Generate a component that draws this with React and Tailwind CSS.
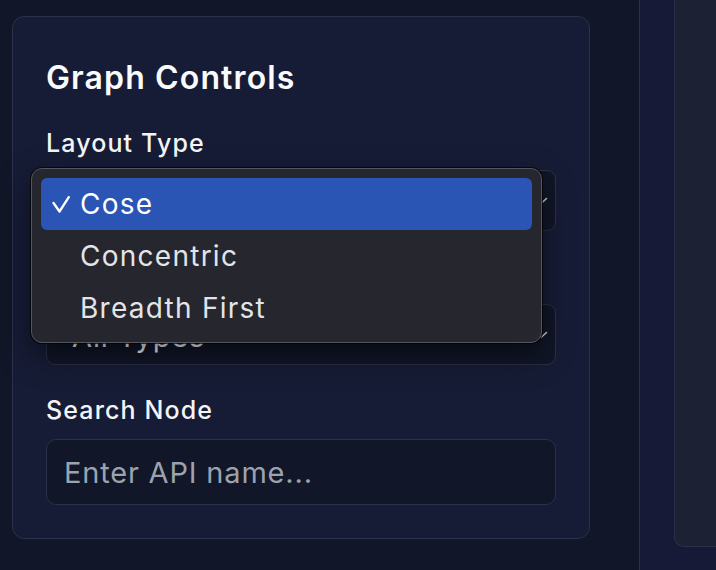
import React from "react";

function Chevron() {
  return (
    <svg
      className="absolute right-[7px] top-1/2 -translate-y-1/2"
      width="14"
      height="8"
      viewBox="0 0 14 8"
      fill="none"
    >
      <path d="M1.5 1.5 L7 6.5 L12.5 1.5" stroke="#d1d5db" strokeWidth="1.6" strokeLinecap="round" strokeLinejoin="round" />
    </svg>
  );
}

function Check() {
  return (
    <svg width="18" height="17" viewBox="0 0 18 17" fill="none">
      <path d="M1.5 7 L7.5 15.5 L16.8 1.2" stroke="#ffffff" strokeWidth="2.3" strokeLinecap="round" strokeLinejoin="round" />
    </svg>
  );
}

export default function App() {
  const options = ["Cose", "Concentric", "Breadth First"];
  return (
    <div className="w-[716px] h-[570px] overflow-hidden flex bg-[#111628] font-['Inter',sans-serif] text-white">
      <div className="w-[639px] shrink-0 pl-3 pt-4">
        <div className="relative w-[578px] h-[523px] rounded-[12px] border border-[#2b3147] bg-[#171c36] px-[33px] pt-[41px]">
          <h2 className="text-[32px] leading-[40px] font-semibold tracking-[0.035em] text-[#f9fafb]">
            Graph Controls
          </h2>

          <div className="mt-[30px]">
            <label className="block text-[25px] leading-[30px] font-medium tracking-[0.045em] text-[#f3f4f6]">
              Layout Type
            </label>
            <div className="relative mt-3 h-[61px] rounded-[9px] border border-[#2b3147] bg-[#111628] flex items-center pl-[25px] text-[29px] text-[#f3f4f6]">
              <span className="invisible">Cose</span>
              <Chevron />
              <div className="absolute left-[-16px] top-[-3px] z-10 w-[511px] h-[175px] rounded-[11px] border border-[#55575f] bg-[#25262e] p-[9px] shadow-[0_0_0_1px_rgba(0,0,0,0.7),0_12px_30px_rgba(0,0,0,0.5)]">
                {options.map((o, i) => (
                  <div
                    key={o}
                    className={
                      i === 0
                        ? "h-[52px] rounded-[6px] bg-[#2b55b5] flex items-center pl-[11px] text-white"
                        : "h-[52px] rounded-[6px] flex items-center pl-[11px] text-[#e4e4e7]"
                    }
                  >
                    <span className="w-[28px] flex items-center">{i === 0 ? <Check /> : null}</span>
                    <span className="text-[28px] leading-none tracking-[0.045em]">{o}</span>
                  </div>
                ))}
              </div>
            </div>
          </div>

          <div className="mt-[31px]">
            <label className="invisible block text-[25px] leading-[30px] font-medium tracking-[0.045em] text-[#f3f4f6]">
              Node Type
            </label>
            <div className="relative mt-3 h-[61px] rounded-[9px] border border-[#2b3147] bg-[#111628] flex items-center pl-[25px] pt-[4px] text-[29px] tracking-[0.03em] text-[#f3f4f6]">
              <span>All Types</span>
              <Chevron />
            </div>
          </div>

          <div className="mt-[30px]">
            <label className="block text-[25px] leading-[30px] font-medium tracking-[0.045em] text-[#f3f4f6]">
              Search Node
            </label>
            <input
              type="text"
              placeholder="Enter API name..."
              className="mt-[14px] block w-full h-[66px] rounded-[10px] border border-[#2b3147] bg-[#111628] px-[17px] text-[29px] tracking-[0.028em] text-white placeholder:text-[#9ca3af] outline-none"
            />
          </div>
        </div>
      </div>

      <div className="flex-1 border-l border-[#2b3147] bg-[#161a36] pl-[34px]">
        <div className="h-[547px] rounded-bl-[10px] border-l border-b border-[#2b3147] bg-[#1c2133]" />
      </div>
    </div>
  );
}
